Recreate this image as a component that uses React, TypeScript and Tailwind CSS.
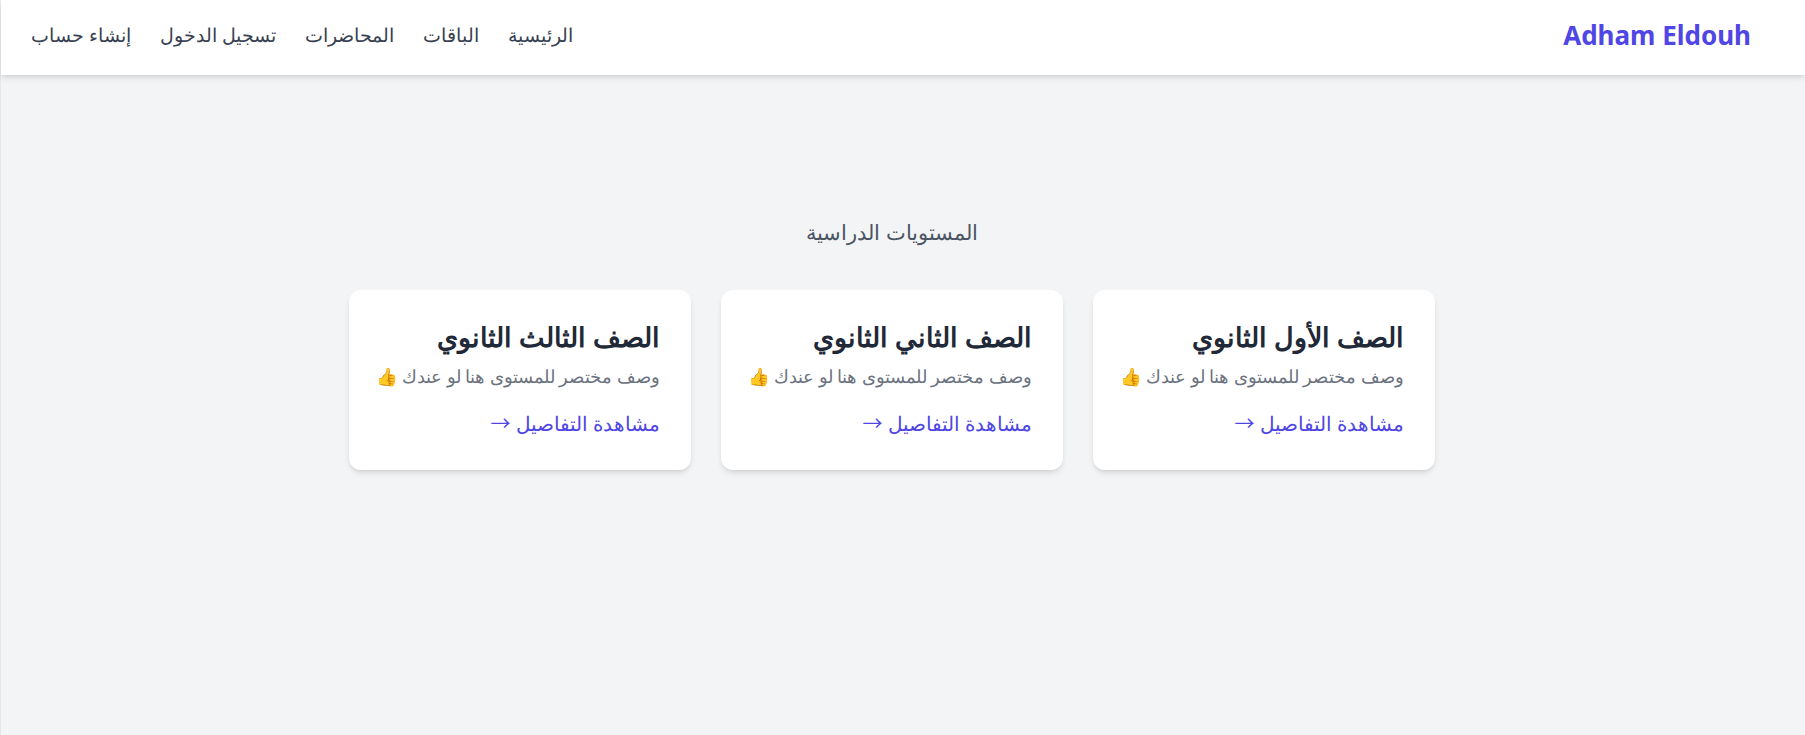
const FONT = "font-['Noto_Sans','Noto_Sans_CJK_SC',sans-serif]";
const LEVELS = ["الصف الأول الثانوي", "الصف الثاني الثانوي", "الصف الثالث الثانوي"];
const LINKS = ["الرئيسية", "الباقات", "المحاضرات", "تسجيل الدخول", "إنشاء حساب"];

export default function App() {
  return (
    <div dir="rtl" className={`min-h-[735px] bg-[#f3f4f6] border-l border-gray-200 ${FONT}`}>
      <nav className="h-[75px] bg-white shadow-md flex items-center justify-between pr-[54px] pl-[30px] pb-1">
        <a className="text-[26px] font-bold text-[#4f46e5]" dir="ltr">Adham Eldouh</a>
        <ul className="flex gap-[29px] text-[18.8px] text-[#374151]">
          {LINKS.map((l) => (
            <li key={l}>{l}</li>
          ))}
        </ul>
      </nav>
      <main className="pt-[141px] pr-[22px]">
        <h2 className="text-center text-[21.3px] text-[#4b5563] mb-[42px]">المستويات الدراسية</h2>
        <div className="flex justify-center gap-[30px]">
          {LEVELS.map((t) => (
            <div key={t} className="w-[342px] h-[180px] bg-white rounded-xl shadow-md pt-[27px] px-[31px]">
              <h3 className="text-[27px] font-bold text-[#1f2937]">{t}</h3>
              <p className="text-[17.5px] text-[#6b7280] mt-[6px] whitespace-nowrap">وصف مختصر للمستوى هنا لو عندك 👍</p>
              <a className="block text-[20px] text-[#4f46e5] mt-[19px]">مشاهدة التفاصيل →</a>
            </div>
          ))}
        </div>
      </main>
    </div>
  );
}
